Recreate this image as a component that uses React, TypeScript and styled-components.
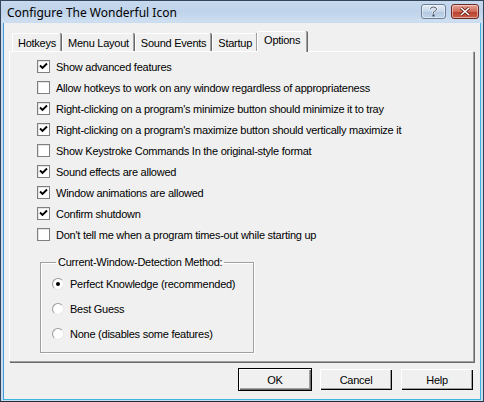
import React from 'react';
import styled, { createGlobalStyle } from 'styled-components';

const GlobalStyle = createGlobalStyle`
    html, body {
        margin: 0;
        padding: 0;
        background: #ffffff;
    }
`;

const Window = styled.div`
    width: 484px;
    height: 402px;
    box-sizing: border-box;
    display: flex;
    flex-direction: column;
    background: #c9dbef;
    border: 1px solid #34455a;
    border-bottom-color: #1f2d3c;
`;

const TitleBar = styled.div`
    height: 21px;
    display: flex;
    align-items: center;
    padding: 0 4px 0 6px;
    background: linear-gradient(to bottom, #c6d9ee 0%, #bfd3ea 50%, #cfdff1 100%);
    font-family: "Noto Sans", "DejaVu Sans", sans-serif;
    font-size: 12px;
    color: #000;
`;

const Title = styled.div`
    flex: 1;
    padding-top: 1px;
`;

const CaptionButton = styled.div<{ $close?: boolean }>`
    width: ${p => (p.$close ? 28 : 25)}px;
    height: 15px;
    box-sizing: border-box;
    margin-left: ${p => (p.$close ? 5 : 0)}px;
    border: 1px solid ${p => (p.$close ? '#6e2a22' : '#6d7f97')};
    border-radius: 3px;
    background: ${p =>
        p.$close
            ? 'linear-gradient(to bottom, #e6a293 0%, #cf6a58 50%, #b8402c 51%, #c8604a 100%)'
            : 'linear-gradient(to bottom, #e4edf7 0%, #c6d6e9 50%, #b3c7df 51%, #c3d5ea 100%)'};
    display: flex;
    align-items: center;
    justify-content: center;
    box-shadow: inset 0 0 0 1px rgba(255, 255, 255, 0.45);
`;

const Client = styled.div`
    flex: 1;
    margin: 1px 2px 1px 2px;
    background: #f0f0f0;
    border-left: 1px solid #3f9bd8;
    border-right: 1px solid #3fb3e0;
    border-bottom: 1px solid #38b6df;
    display: flex;
    flex-direction: column;
    padding: 8px 5px 0 5px;
    font-family: "Liberation Sans", Arial, sans-serif;
    font-size: 11px;
    letter-spacing: -0.25px;
    color: #000;
`;

const TabStrip = styled.div`
    display: flex;
    align-items: flex-end;
    height: 20px;
    padding-left: 3px;
    position: relative;
    z-index: 1;
`;

const Tab = styled.div<{ $active?: boolean }>`
    box-sizing: border-box;
    height: ${p => (p.$active ? 21 : 18)}px;
    margin-bottom: ${p => (p.$active ? -1 : 0)}px;
    padding: ${p => (p.$active ? '2px 6px 0 6px' : '3px 4px 0 5px')};
    margin-left: ${p => (p.$active ? '-1px' : '0')};
    margin-right: ${p => (p.$active ? '-1px' : '1px')};
    background: #f0f0f0;
    border-top: 1px solid #ffffff;
    border-left: 1px solid #ffffff;
    border-right: 1px solid #a0a0a0;
    box-shadow: 1px 0 0 #696969;
    border-radius: 2px 2px 0 0;
    white-space: nowrap;
`;

const Panel = styled.div`
    height: 311px;
    box-sizing: border-box;
    border-top: 1px solid #ffffff;
    border-left: 1px solid #ffffff;
    border-right: 1px solid #a0a0a0;
    border-bottom: 1px solid #a0a0a0;
    box-shadow: 1px 1px 0 #696969;
    margin-right: 1px;
    padding: 4px 0 0 27px;
    display: flex;
    flex-direction: column;
`;

const CheckRow = styled.label`
    display: flex;
    align-items: center;
    height: 21px;
    gap: 6px;
`;

const CheckBox = styled.span`
    width: 13px;
    height: 13px;
    box-sizing: border-box;
    border: 1px solid #7f7f7f;
    background: #ffffff;
    box-shadow: inset 1px 1px 0 #e4e4e4;
    display: flex;
    align-items: center;
    justify-content: center;
    flex-shrink: 0;
`;

const GroupBox = styled.fieldset`
    margin: 11px 0 0 3px;
    width: 214px;
    height: 97px;
    box-sizing: border-box;
    border: 1px solid #a0a0a0;
    box-shadow: 1px 1px 0 #ffffff, inset 1px 1px 0 #ffffff;
    padding: 3px 0 0 11px;
    display: flex;
    flex-direction: column;
`;

const Legend = styled.legend`
    padding: 0 2px;
    margin-left: 4px;
`;

const RadioRow = styled.label`
    display: flex;
    align-items: center;
    height: 25px;
    gap: 6px;
`;

const Radio = styled.span<{ $on?: boolean }>`
    width: 12px;
    height: 12px;
    box-sizing: border-box;
    border-radius: 50%;
    border: 1px solid #9a9a9a;
    border-right-color: #e8e8e8;
    border-bottom-color: #e8e8e8;
    background: #ffffff;
    display: flex;
    align-items: center;
    justify-content: center;
    flex-shrink: 0;
    &::after {
        content: '';
        width: 4px;
        height: 4px;
        border-radius: 50%;
        background: ${p => (p.$on ? '#000' : 'transparent')};
    }
`;

const ButtonRow = styled.div`
    display: flex;
    justify-content: flex-end;
    gap: 7px;
    padding: 6px 1px 0 0;
`;

const Button = styled.div<{ $default?: boolean }>`
    width: 74px;
    height: 23px;
    box-sizing: border-box;
    display: flex;
    align-items: center;
    justify-content: center;
    background: #f0f0f0;
    border: 1px solid ${p => (p.$default ? '#000' : 'transparent')};
    box-shadow: ${p =>
        p.$default
            ? 'inset 1px 1px 0 #ffffff, inset -1px -1px 0 #696969, inset -2px -2px 0 #a0a0a0'
            : 'inset 1px 1px 0 #ffffff, inset -1px -1px 0 #000000, inset -2px -2px 0 #a0a0a0'};
`;

const Check = () => (
    <svg width="9" height="9" viewBox="0 0 9 9">
        <path d="M1 3.5 L3.5 6 L8 1.5" stroke="#000" strokeWidth="1.9" fill="none" />
    </svg>
);

const options: [string, boolean][] = [
    ['Show advanced features', true],
    ['Allow hotkeys to work on any window regardless of appropriateness', false],
    ["Right-clicking on a program's minimize button should minimize it to tray", true],
    ["Right-clicking on a program's maximize button should vertically maximize it", true],
    ['Show Keystroke Commands In the original-style format', false],
    ['Sound effects are allowed', true],
    ['Window animations are allowed', true],
    ['Confirm shutdown', true],
    ["Don't tell me when a program times-out while starting up", false],
];

const methods: [string, boolean][] = [
    ['Perfect Knowledge (recommended)', true],
    ['Best Guess', false],
    ['None (disables some features)', false],
];

const tabs = ['Hotkeys', 'Menu Layout', 'Sound Events', 'Startup', 'Options'];

const App = () => {
    return (
        <>
            <GlobalStyle />
            <Window>
                <TitleBar>
                    <Title>Configure The Wonderful Icon</Title>
                    <CaptionButton>
                        <svg width="9" height="11" viewBox="0 0 9 11">
                            <path d="M1.5 3 Q1.5 1 4.5 1 Q7.5 1 7.5 3.2 Q7.5 4.6 5.2 5.6 L4.5 6 L4.5 7.5" stroke="#fff" strokeWidth="2" fill="none" />
                            <path d="M1.5 3 Q1.5 1 4.5 1 Q7.5 1 7.5 3.2 Q7.5 4.6 5.2 5.6 L4.5 6 L4.5 7.5" stroke="#3c4a5c" strokeWidth="1" fill="none" />
                            <rect x="3.5" y="8.5" width="2" height="2" fill="#3c4a5c" />
                        </svg>
                    </CaptionButton>
                    <CaptionButton $close>
                        <svg width="12" height="9" viewBox="0 0 12 9">
                            <path d="M2 1 L10 8 M10 1 L2 8" stroke="#5a1a10" strokeWidth="3" />
                            <path d="M2 1 L10 8 M10 1 L2 8" stroke="#ffffff" strokeWidth="1.6" />
                        </svg>
                    </CaptionButton>
                </TitleBar>
                <Client>
                    <TabStrip>
                        {tabs.map(t => (
                            <Tab key={t} $active={t === 'Options'}>{t}</Tab>
                        ))}
                    </TabStrip>
                    <Panel>
                        {options.map(([label, on]) => (
                            <CheckRow key={label}>
                                <CheckBox>{on && <Check />}</CheckBox>
                                <span>{label}</span>
                            </CheckRow>
                        ))}
                        <GroupBox>
                            <Legend>Current-Window-Detection Method:</Legend>
                            {methods.map(([label, on]) => (
                                <RadioRow key={label}>
                                    <Radio $on={on} />
                                    <span>{label}</span>
                                </RadioRow>
                            ))}
                        </GroupBox>
                    </Panel>
                    <ButtonRow>
                        <Button $default>OK</Button>
                        <Button>Cancel</Button>
                        <Button>Help</Button>
                    </ButtonRow>
                </Client>
            </Window>
        </>
    );
};

export default App;
